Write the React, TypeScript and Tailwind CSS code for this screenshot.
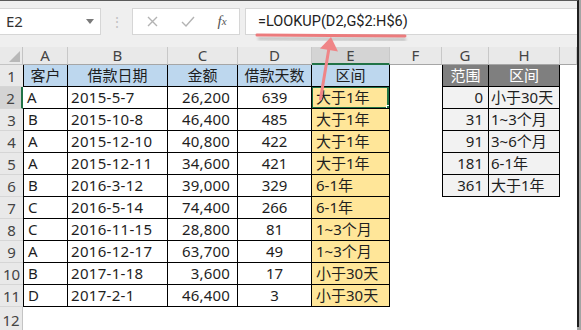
import React from "react";

const font = { fontFamily: '"Noto Sans", "Noto Sans CJK SC", sans-serif' };

const data = [
  ["A", "2015-5-7", "26,200", "639", "大于1年"],
  ["B", "2015-10-8", "46,400", "485", "大于1年"],
  ["A", "2015-12-10", "40,800", "422", "大于1年"],
  ["A", "2015-12-11", "34,600", "421", "大于1年"],
  ["B", "2016-3-12", "39,000", "329", "6-1年"],
  ["C", "2016-5-14", "74,400", "266", "6-1年"],
  ["C", "2016-11-15", "28,800", "81", "1~3个月"],
  ["A", "2016-12-17", "63,700", "49", "1~3个月"],
  ["B", "2017-1-18", "3,600", "17", "小于30天"],
  ["D", "2017-2-1", "46,400", "3", "小于30天"],
];

const ranges = [
  ["0", "小于30天"],
  ["31", "1~3个月"],
  ["91", "3~6个月"],
  ["181", "6-1年"],
  ["361", "大于1年"],
];

const letters = ["A", "B", "C", "D", "E", "F", "G", "H", ""];

function FormulaBar() {
  return (
    <div className="h-[46px] shrink-0 bg-[#efefef] flex items-start pt-[7px]">
      <div className="w-[101px] h-[27px] bg-white border border-l-0 border-[#d6d6d6] flex items-center justify-between pl-[6px] pr-[6px]">
        <span className="text-[15px] text-[#333]">E2</span>
        <span className="w-0 h-0 border-l-[4px] border-r-[4px] border-t-[5px] border-l-transparent border-r-transparent border-t-[#7a7a7a]" />
      </div>
      <div className="w-[31px] h-[27px] flex items-center justify-center text-[#c2c2c2] text-[14px]">⋮</div>
      <div className="w-[108px] h-[27px] bg-white border border-[#d6d6d6] flex items-center">
        <span className="w-[38px] flex justify-center">
          <svg width="11" height="11" viewBox="0 0 11 11">
            <path d="M1 1 L10 10 M10 1 L1 10" stroke="#b3b3b3" strokeWidth="1.4" />
          </svg>
        </span>
        <span className="w-[34px] flex justify-center">
          <svg width="14" height="11" viewBox="0 0 14 11">
            <path d="M1 6 L5 10 L13 1" stroke="#b3b3b3" strokeWidth="1.4" fill="none" />
          </svg>
        </span>
        <span
          className="w-[34px] flex justify-center text-[15px] italic text-[#555]"
          style={{ fontFamily: '"Liberation Serif", serif' }}
        >
          f<span className="text-[11px] mt-[3px]">x</span>
        </span>
      </div>
      <div className="flex-1 ml-[5px] h-[27px] bg-white border border-r-0 border-[#d6d6d6] flex items-center pl-[12px]">
        <span className="text-[14.5px] text-[#222]" style={{ fontFamily: "Roboto, sans-serif" }}>
          =LOOKUP(D2,G$2:H$6)
        </span>
      </div>
    </div>
  );
}

function Sheet() {
  const cells: React.ReactNode[] = [];

  // column header row
  cells.push(
    <div key="corner" className="bg-[#e9e9e9] border-r border-b border-[#c4c4c4] flex items-end justify-end pr-[2px] pb-[2px]">
      <svg width="11" height="11" viewBox="0 0 11 11">
        <polygon points="11,0 11,11 0,11" fill="#b8b8b8" />
      </svg>
    </div>
  );
  letters.forEach((l, i) => {
    const sel = l === "E";
    cells.push(
      <div
        key={"h" + i}
        className={
          "flex items-center justify-center text-[15px] text-[#444] border-r border-[#c8c8c8] " +
          (sel ? "bg-[#d4d4d4] border-b-2 border-b-[#217346]" : "bg-[#e9e9e9] border-b border-b-[#a6a6a6]")
        }
      >
        {l}
      </div>
    );
  });

  for (let r = 1; r <= 12; r++) {
    const sel = r === 2;
    cells.push(
      <div
        key={"r" + r}
        className={
          "flex items-center justify-center text-[15px] text-[#444] border-b border-b-[#d6d6d6] pt-[2px] " +
          (sel ? "bg-[#d4d4d4] border-r-2 border-r-[#217346]" : "bg-[#e9e9e9] " + (r >= 12 ? "border-r border-r-[#c4c4c4]" : ""))
        }
      >
        {r}
      </div>
    );

    const tb = "border-r border-b border-black text-[15px] text-[#1e1e1e] flex items-center whitespace-nowrap overflow-hidden";

    if (r === 1) {
      ["客户", "借款日期", "金额", "借款天数", "区间"].forEach((t, i) => {
        cells.push(
          <div key={"c1" + i} className={tb + " bg-[#bdd7ee] justify-center" + (i === 0 ? " border-l" : "")}>
            {t}
          </div>
        );
      });
    } else if (r <= 11) {
      const d = data[r - 2];
      cells.push(
        <div key={"a" + r} className={tb + " pl-[4px]" + (r === 2 ? "" : " border-l")}>{d[0]}</div>,
        <div key={"b" + r} className={tb + " pl-[3px] tracking-[0.3px]"}>{d[1]}</div>,
        <div key={"c" + r} className={tb + " justify-end pr-[7px] tracking-[0.2px]"}>{d[2]}</div>,
        <div key={"d" + r} className={tb + " justify-center"}>{d[3]}</div>,
        <div key={"e" + r} className={tb + " bg-[#ffe699] pl-[4px] relative"}>
          {d[4]}
          {r === 2 && (
            <>
              <span className="absolute -left-px -top-px w-[78px] h-[23px] border-2 border-[#217346]" />
              <span className="absolute -right-[3px] -bottom-[3px] w-[6px] h-[6px] bg-[#217346] border border-white" />
            </>
          )}
        </div>
      );
    } else {
      for (let i = 0; i < 5; i++) cells.push(<div key={"x" + r + i} />);
    }

    // F
    cells.push(<div key={"f" + r} />);

    // G, H
    if (r === 1) {
      cells.push(
        <div key="g1" className={tb + " border-l bg-[#7f7f7f] text-white justify-center"}>范围</div>,
        <div key="h1" className={tb + " bg-[#7f7f7f] text-white justify-center"}>区间</div>
      );
    } else if (r <= 6) {
      const g = ranges[r - 2];
      cells.push(
        <div key={"g" + r} className={tb + " border-l bg-[#f2f2f2] justify-end pr-[5px]"}>{g[0]}</div>,
        <div key={"hh" + r} className={tb + " bg-[#f2f2f2] pl-[2px]"}>{g[1]}</div>
      );
    } else {
      cells.push(<div key={"g" + r} />, <div key={"hh" + r} />);
    }

    // I
    cells.push(<div key={"i" + r} />);
  }

  return (
    <div className="flex-1 grid grid-cols-[23px_45px_100px_70px_74px_78px_52px_47px_71px_1fr] grid-rows-[18px_repeat(11,22px)_1fr] bg-white">
      {cells}
    </div>
  );
}

export default function App() {
  return (
    <div className="w-[581px] h-[330px] bg-[#a4a4a4] relative overflow-hidden" style={font}>
      <div className="w-[579px] h-[327px] bg-white border-t border-t-[#5a5a5a] border-r-2 border-b-2 border-r-[#1f1f1f] border-b-[#1f1f1f] flex flex-col">
        <FormulaBar />
        <Sheet />
      </div>
      <svg className="absolute inset-0 pointer-events-none" width="581" height="330">
        <defs>
          <filter id="sh" x="-10%" y="-100%" width="120%" height="300%">
            <feGaussianBlur stdDeviation="1.5" />
          </filter>
        </defs>
        <path d="M258 38.5 L406 39.5" stroke="#9a9a9a" strokeWidth="3" opacity="0.6" filter="url(#sh)" />
        <path d="M257 35 L405 36" stroke="#ec7b7d" strokeWidth="3" strokeLinecap="round" />
        <path d="M320.5 99 L329 48" stroke="#ef8587" strokeWidth="3" strokeLinecap="round" />
        <polygon points="331,37 320,48.5 338,51.5" fill="#ef8587" />
      </svg>
    </div>
  );
}
